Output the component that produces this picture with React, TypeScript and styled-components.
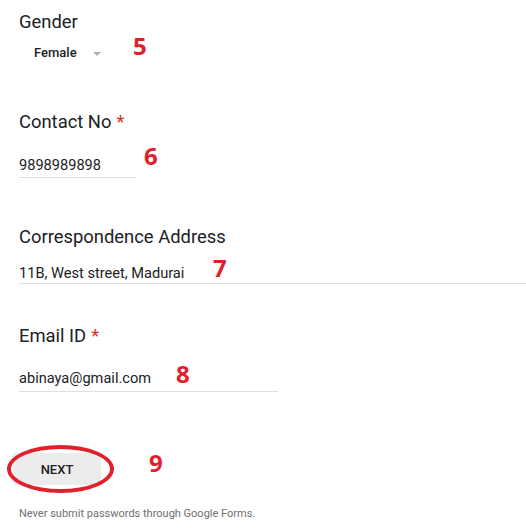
import React from "react";
import styled, { createGlobalStyle } from "styled-components";

const Global = createGlobalStyle`
  html, body { margin: 0; padding: 0; background: #ffffff; }
  body { font-family: Roboto, "Liberation Sans", Arial, sans-serif; color: #202124; }
`;

const Page = styled.div`
  width: 526px;
  height: 528px;
  padding: 10px 0 0 19px;
  box-sizing: border-box;
  display: flex;
  flex-direction: column;
  overflow: hidden;
`;

const Question = styled.div<{ $mt: number }>`
  position: relative;
  display: flex;
  flex-direction: column;
  margin-top: ${(p) => p.$mt}px;
`;

const Label = styled.div`
  font-size: 18.4px;
  line-height: 24px;
  color: #202124;
`;

const Required = styled.span`
  color: #d93025;
  margin-left: 5px;
`;

const SelectRow = styled.div`
  display: flex;
  align-items: center;
  gap: 16px;
  margin-top: 9px;
  padding-left: 15px;
  height: 20px;
`;

const SelectText = styled.span`
  font-size: 13px;
  line-height: 20px;
  font-weight: 500;
  color: #202124;
`;

const Caret = styled.span`
  width: 0;
  height: 0;
  border-left: 4.5px solid transparent;
  border-right: 4.5px solid transparent;
  border-top: 4.5px solid #b0b0b0;
  margin-top: 1px;
`;

const Input = styled.div<{ $w: string; $mt: number; $pb: number }>`
  width: ${(p) => p.$w};
  margin-top: ${(p) => p.$mt}px;
  padding-bottom: ${(p) => p.$pb}px;
  border-bottom: 1px solid #e0e0e0;
  font-size: 14.6px;
  line-height: 20px;
  color: #202124;
  white-space: nowrap;
`;

const Badge = styled.span<{ $x: number; $y: number }>`
  position: absolute;
  left: ${(p) => p.$x}px;
  top: ${(p) => p.$y}px;
  font-family: "Open Sans", "DejaVu Sans", sans-serif;
  font-weight: 700;
  font-size: 24px;
  line-height: 24px;
  color: #e0202a;
`;

const ButtonRow = styled.div`
  position: relative;
  display: flex;
  margin-top: 61px;
`;

const NextButton = styled.button`
  margin-left: -6px;
  width: 88px;
  height: 32px;
  border: none;
  border-radius: 3px;
  background: #ececec;
  font-family: Roboto, "Liberation Sans", Arial, sans-serif;
  font-size: 13px;
  font-weight: 500;
  color: #202124;
  padding: 0;
  cursor: pointer;
`;

const Ring = styled.span`
  position: absolute;
  left: -12px;
  top: -8px;
  width: 107px;
  height: 48px;
  box-sizing: border-box;
  border: 4px solid #e0202a;
  border-radius: 50%;
  pointer-events: none;
`;

const Footer = styled.div`
  margin-top: 21px;
  font-size: 11px;
  line-height: 16px;
  color: #6f6f6f;
`;

export default function App() {
  return (
    <>
      <Global />
      <Page>
        <Question $mt={0}>
          <Label>Gender</Label>
          <SelectRow>
            <SelectText>Female</SelectText>
            <Caret />
          </SelectRow>
          <Badge $x={114} $y={24}>5</Badge>
        </Question>

        <Question $mt={47}>
          <Label>
            Contact No<Required>*</Required>
          </Label>
          <Input $w="117px" $mt={21} $pb={2}>9898989898</Input>
          <Badge $x={125} $y={34}>6</Badge>
        </Question>

        <Question $mt={47}>
          <Label>Correspondence Address</Label>
          <Input $w="507px" $mt={14} $pb={0}>11B, West street, Madurai</Input>
          <Badge $x={194} $y={31}>7</Badge>
        </Question>

        <Question $mt={40}>
          <Label>
            Email ID<Required>*</Required>
          </Label>
          <Input $w="259px" $mt={20} $pb={3}>abinaya@gmail.com</Input>
          <Badge $x={157} $y={38}>8</Badge>
        </Question>

        <ButtonRow>
          <NextButton>NEXT</NextButton>
          <Ring />
          <Badge $x={130} $y={-2}>9</Badge>
        </ButtonRow>

        <Footer>Never submit passwords through Google Forms.</Footer>
      </Page>
    </>
  );
}
